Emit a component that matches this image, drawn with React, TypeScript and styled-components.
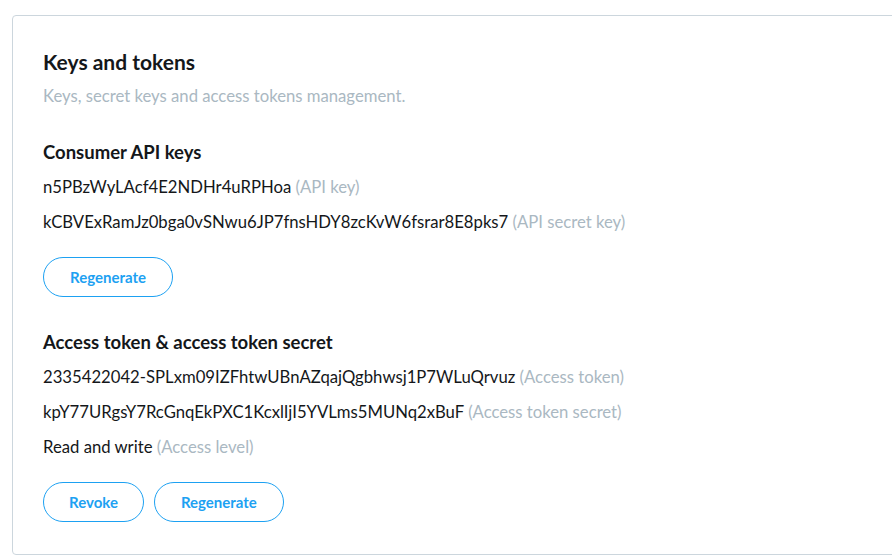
import React from "react";
import styled, { createGlobalStyle } from "styled-components";

const Global = createGlobalStyle`
  html, body { margin: 0; padding: 0; background: #ffffff; }
  body { font-family: Lato, "Noto Sans", sans-serif; color: #14171a; }
  * { box-sizing: border-box; }
`;

const Page = styled.div`
  padding: 15px 0 0 12px;
  width: 892px;
  overflow: hidden;
`;

const Card = styled.section`
  width: 900px;
  border: 1px solid #ccd6dd;
  border-radius: 4px;
  padding: 28px 30px 32px 30px;
  background: #ffffff;
`;

const Title = styled.h1`
  margin: 0;
  font-size: 21px;
  font-weight: 700;
  line-height: 35px;
  color: #14171a;
`;

const Subtitle = styled.p`
  margin: 0;
  font-size: 16.7px;
  line-height: 35px;
  color: #aab8c2;
`;

const Section = styled.div<{ $gap: number }>`
  margin-top: ${(p) => p.$gap}px;
`;

const Heading = styled.h2`
  margin: 0;
  font-size: 18.5px;
  font-weight: 700;
  line-height: 35px;
  color: #14171a;
`;

const Row = styled.div`
  font-size: 16.7px;
  line-height: 35px;
  color: #14171a;
  white-space: nowrap;
`;

const Note = styled.span`
  color: #aab8c2;
`;

const Buttons = styled.div`
  display: flex;
  gap: 10px;
  margin-top: 17px;
`;

const PillButton = styled.button<{ $pad?: number }>`
  height: 40px;
  padding: 0 ${(p) => p.$pad ?? 26}px;
  border: 1px solid #1da1f2;
  border-radius: 999px;
  background: #ffffff;
  color: #1da1f2;
  font-family: inherit;
  font-size: 15px;
  font-weight: 700;
  cursor: pointer;
`;

export default function App() {
  return (
    <>
      <Global />
      <Page>
        <Card>
          <Title>Keys and tokens</Title>
          <Subtitle>Keys, secret keys and access tokens management.</Subtitle>
          <Section $gap={21}>
            <Heading>Consumer API keys</Heading>
            <Row>
              n5PBzWyLAcf4E2NDHr4uRPHoa <Note>(API key)</Note>
            </Row>
            <Row>
              kCBVExRamJz0bga0vSNwu6JP7fnsHDY8zcKvW6fsrar8E8pks7{" "}
              <Note>(API secret key)</Note>
            </Row>
            <Buttons>
              <PillButton>Regenerate</PillButton>
            </Buttons>
          </Section>
          <Section $gap={28}>
            <Heading>Access token &amp; access token secret</Heading>
            <Row>
              2335422042-SPLxm09IZFhtwUBnAZqajQgbhwsj1P7WLuQrvuz{" "}
              <Note>(Access token)</Note>
            </Row>
            <Row>
              kpY77URgsY7RcGnqEkPXC1KcxlIjI5YVLms5MUNq2xBuF{" "}
              <Note>(Access token secret)</Note>
            </Row>
            <Row>
              Read and write <Note>(Access level)</Note>
            </Row>
            <Buttons>
              <PillButton $pad={25}>Revoke</PillButton>
              <PillButton>Regenerate</PillButton>
            </Buttons>
          </Section>
        </Card>
      </Page>
    </>
  );
}
